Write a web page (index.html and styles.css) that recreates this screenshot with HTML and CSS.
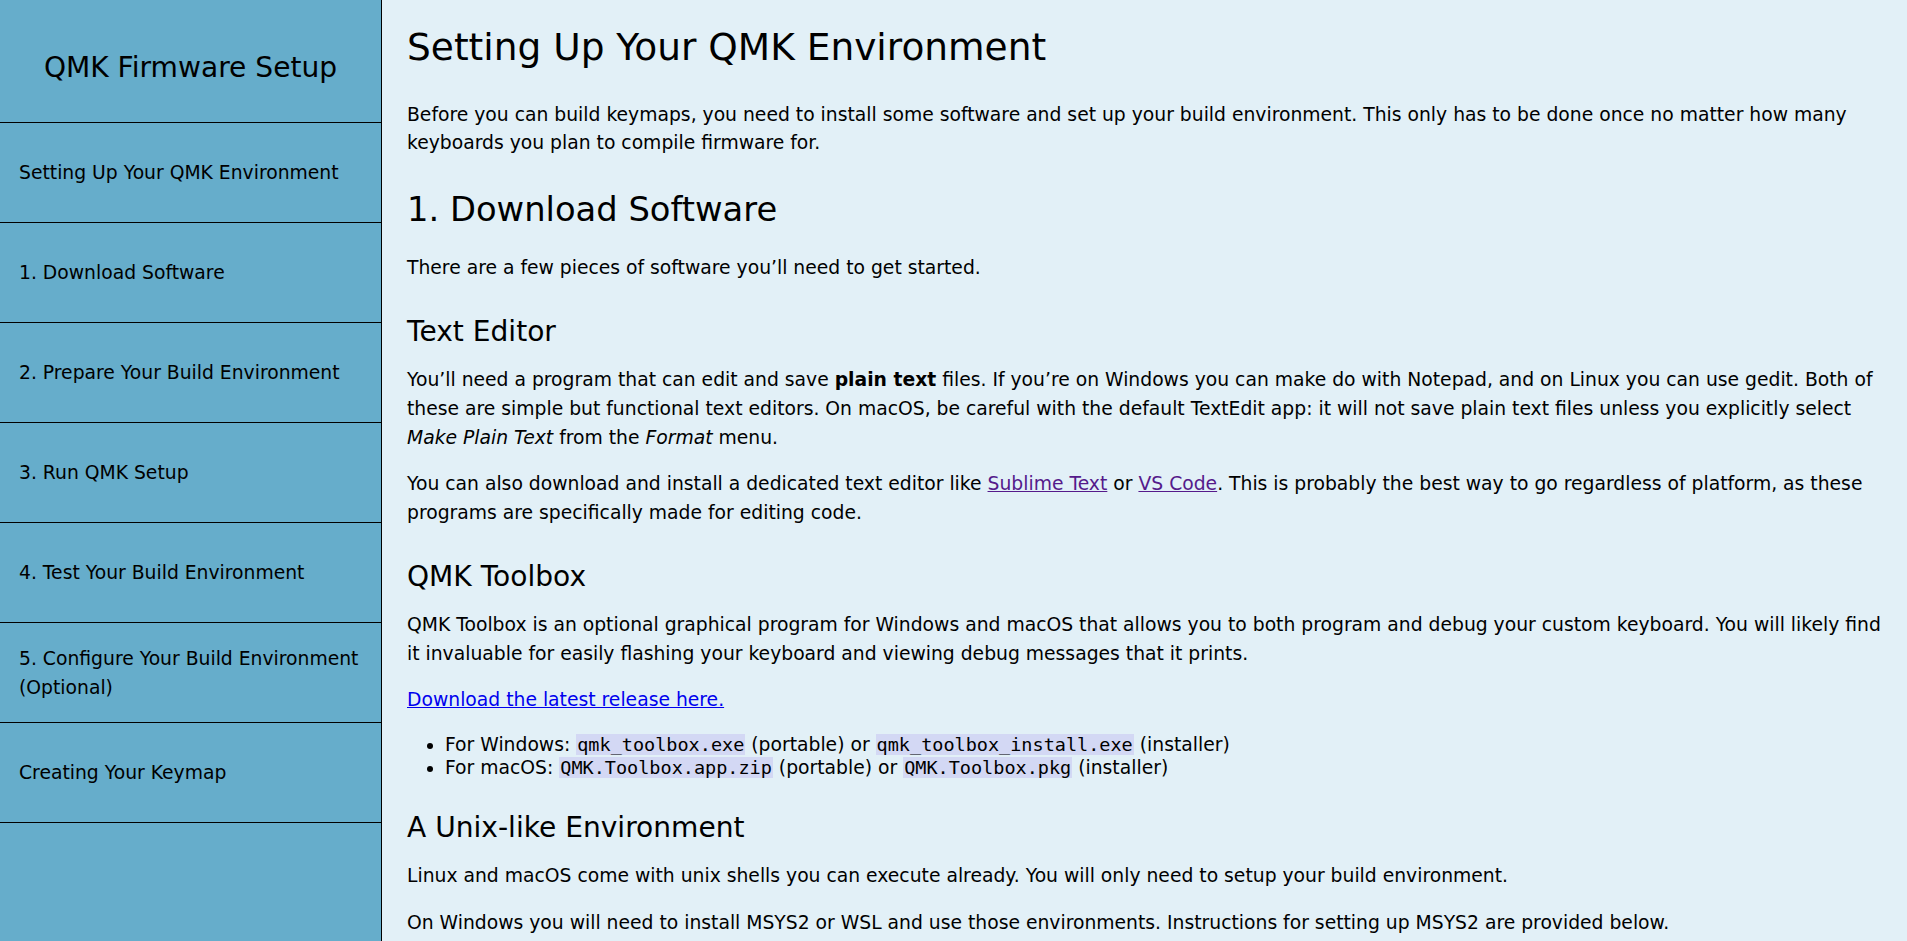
FILE: index.html
```html
<!DOCTYPE html>
<html lang="en">
<head>
<meta charset="utf-8">
<title>Setting Up Your QMK Environment</title>
<link rel="stylesheet" href="styles.css">
</head>
<body>
<div class="layout">
  <nav class="sidebar">
    <div class="sidebar-title">QMK Firmware Setup</div>
    <a class="nav-item" href="#setup">Setting Up Your QMK Environment</a>
    <a class="nav-item" href="#download">1. Download Software</a>
    <a class="nav-item" href="#prepare">2. Prepare Your Build Environment</a>
    <a class="nav-item" href="#run">3. Run QMK Setup</a>
    <a class="nav-item" href="#test">4. Test Your Build Environment</a>
    <a class="nav-item" href="#configure">5. Configure Your Build Environment (Optional)</a>
    <a class="nav-item" href="#keymap">Creating Your Keymap</a>
  </nav>
  <main class="content">
    <h1 id="setup">Setting Up Your QMK Environment</h1>
    <p>Before you can build keymaps, you need to install some software and set up your build environment. This only has to be done once no matter how many keyboards you plan to compile firmware for.</p>
    <h2 id="download">1. Download Software</h2>
    <p>There are a few pieces of software you’ll need to get started.</p>
    <h3>Text Editor</h3>
    <p>You’ll need a program that can edit and save <strong>plain text</strong> files. If you’re on Windows you can make do with Notepad, and on Linux you can use gedit. Both of these are simple but functional text editors. On macOS, be careful with the default TextEdit app: it will not save plain text files unless you explicitly select <em>Make Plain Text</em> from the <em>Format</em> menu.</p>
    <p>You can also download and install a dedicated text editor like <a class="visited" href="#sublime">Sublime Text</a> or <a class="visited" href="#vscode">VS Code</a>. This is probably the best way to go regardless of platform, as these programs are specifically made for editing code.</p>
    <h3>QMK Toolbox</h3>
    <p>QMK Toolbox is an optional graphical program for Windows and macOS that allows you to both program and debug your custom keyboard. You will likely find it invaluable for easily flashing your keyboard and viewing debug messages that it prints.</p>
    <p><a class="link" href="#release">Download the latest release here.</a></p>
    <ul class="list">
      <li>For Windows: <code>qmk_toolbox.exe</code> (portable) or <code>qmk_toolbox_install.exe</code> (installer)</li>
      <li>For macOS: <code>QMK.Toolbox.app.zip</code> (portable) or <code>QMK.Toolbox.pkg</code> (installer)</li>
    </ul>
    <h3>A Unix-like Environment</h3>
    <p>Linux and macOS come with unix shells you can execute already. You will only need to setup your build environment.</p>
    <p>On Windows you will need to install MSYS2 or WSL and use those environments. Instructions for setting up MSYS2 are provided below.</p>
  </main>
</div>
</body>
</html>
```
FILE: styles.css
```css
html, body {
  margin: 0;
  padding: 0;
}

body {
  font-family: "DejaVu Sans", Verdana, sans-serif;
  font-size: 18.75px;
  color: #000;
  background: #e2f0f7;
}

.layout {
  display: flex;
  height: 100vh;
  overflow: hidden;
}

.sidebar {
  flex: 0 0 381px;
  display: flex;
  flex-direction: column;
  background: #66adcb;
  border-right: 1px solid #000;
}

.sidebar-title {
  box-sizing: border-box;
  height: 123px;
  padding-top: 12px;
  display: flex;
  align-items: center;
  justify-content: center;
  font-size: 28.1px;
  border-bottom: 1px solid #000;
}

.nav-item {
  box-sizing: border-box;
  height: 100px;
  display: flex;
  align-items: center;
  padding: 0 0 0 19px;
  line-height: 29px;
  color: #000;
  text-decoration: none;
  border-bottom: 1px solid #000;
}

.content {
  flex: 1 1 auto;
  min-width: 0;
  padding: 0 20px 0 25px;
  overflow: hidden;
  background: #e2f0f7;
}

h1, h2, h3 {
  font-weight: normal;
}

h1 {
  font-size: 37.5px;
  line-height: 57px;
  margin: 19px 0 24.5px;
}

h2 {
  font-size: 33.75px;
  line-height: 52px;
  margin: 26px 0 18px;
}

h3 {
  font-size: 28.1px;
  line-height: 43px;
  margin: 27px 0 13.5px;
}

p {
  line-height: 28.8px;
  margin: 0 0 17.5px;
}

.visited {
  color: #551a8b;
}

.link {
  color: #0000ee;
}

.list {
  margin: 0 0 17.5px;
  padding-left: 38px;
  line-height: 23px;
}

code {
  font-family: "DejaVu Sans Mono", monospace;
  font-size: 18.5px;
  background: #d3d8f4;
  padding: 0 1px;
}
```
